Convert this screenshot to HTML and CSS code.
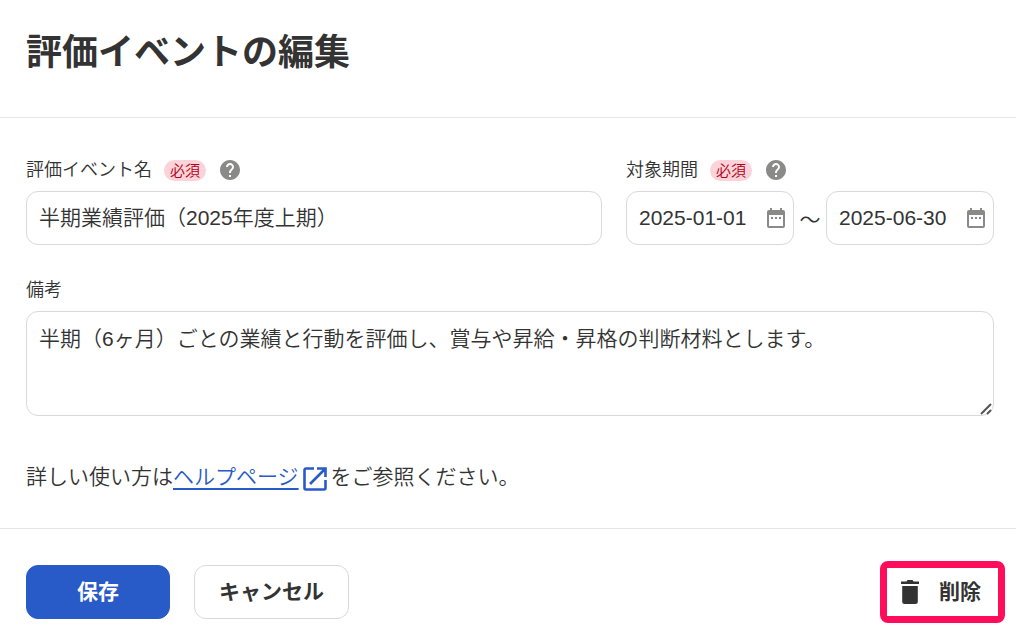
FILE: index.html
```html
<!DOCTYPE html>
<html lang="ja">
<head>
    <meta charset="UTF-8">
    <meta name="viewport" content="width=device-width, initial-scale=1.0">
    <title>評価イベントの編集</title>
    <link rel="stylesheet" href="styles.css">
</head>
<body>
    <form class="event-form">
        <header class="form-header">
            <h1 class="main-title">評価イベントの編集</h1>
        </header>

        <main class="form-body">
            <div class="form-row">
                <!-- イベント名 -->
                <div class="form-group name-group">
                    <div class="label-row">
                        <label for="event_name">評価イベント名</label>
                        <span class="required">必須</span>
                        <svg class="help-icon" viewBox="2 2 20 20" aria-hidden="true"><path d="M12 2C6.48 2 2 6.48 2 12s4.48 10 10 10 10-4.48 10-10S17.52 2 12 2zm1 17h-2v-2h2v2zm2.07-7.75-.9.92C13.45 12.9 13 13.5 13 15h-2v-.5c0-1.1.45-2.1 1.17-2.83l1.24-1.26c.37-.36.59-.86.59-1.41 0-1.1-.9-2-2-2s-2 .9-2 2H8c0-2.21 1.79-4 4-4s4 1.79 4 4c0 .88-.36 1.68-.93 2.25z"/></svg>
                    </div>
                    <input type="text" id="event_name" class="form-input" value="半期業績評価（2025年度上期）">
                </div>

                <!-- 対象期間 -->
                <div class="form-group period-group">
                    <div class="label-row">
                        <label for="start_date">対象期間</label>
                        <span class="required">必須</span>
                        <svg class="help-icon" viewBox="2 2 20 20" aria-hidden="true"><path d="M12 2C6.48 2 2 6.48 2 12s4.48 10 10 10 10-4.48 10-10S17.52 2 12 2zm1 17h-2v-2h2v2zm2.07-7.75-.9.92C13.45 12.9 13 13.5 13 15h-2v-.5c0-1.1.45-2.1 1.17-2.83l1.24-1.26c.37-.36.59-.86.59-1.41 0-1.1-.9-2-2-2s-2 .9-2 2H8c0-2.21 1.79-4 4-4s4 1.79 4 4c0 .88-.36 1.68-.93 2.25z"/></svg>
                    </div>
                    <div class="period">
                        <div class="date-field">
                            <input type="text" id="start_date" class="form-input date-input" value="2025-01-01">
                            <svg class="calendar-icon" viewBox="0 0 18 20" aria-hidden="true"><path fill-rule="evenodd" d="M3 0h2v2h8V0h2v2h1a2 2 0 0 1 2 2v14a2 2 0 0 1-2 2H2a2 2 0 0 1-2-2V4a2 2 0 0 1 2-2h1zM2 7v11h14V7zM4 9h2v2H4zm4 0h2v2H8zm4 0h2v2h-2z"/></svg>
                        </div>
                        <span class="tilde">～</span>
                        <div class="date-field">
                            <input type="text" id="end_date" class="form-input date-input" value="2025-06-30" aria-label="終了日">
                            <svg class="calendar-icon" viewBox="0 0 18 20" aria-hidden="true"><path fill-rule="evenodd" d="M3 0h2v2h8V0h2v2h1a2 2 0 0 1 2 2v14a2 2 0 0 1-2 2H2a2 2 0 0 1-2-2V4a2 2 0 0 1 2-2h1zM2 7v11h14V7zM4 9h2v2H4zm4 0h2v2H8zm4 0h2v2h-2z"/></svg>
                        </div>
                    </div>
                </div>
            </div>

            <!-- 備考 -->
            <div class="form-group">
                <div class="label-row">
                    <label for="note">備考</label>
                </div>
                <div class="note-field">
                    <textarea id="note" class="form-input note">半期（6ヶ月）ごとの業績と行動を評価し、賞与や昇給・昇格の判断材料とします。</textarea>
                    <svg class="grip" viewBox="0 0 12 12" aria-hidden="true"><path d="M1 11 11 1M7 11l4-4"/></svg>
                </div>
            </div>

            <p class="help-text">詳しい使い方は<a href="#">ヘルプページ<svg class="external-icon" viewBox="0 0 24 24" aria-hidden="true"><path d="M11 1.500H3A1.500 1.500 0 0 0 1.500 3v18A1.500 1.500 0 0 0 3 22.500h18a1.500 1.500 0 0 0 1.500-1.500v-8M14 1.500h8.500V10M22 2 7 17"/></svg></a>をご参照ください。</p>
        </main>

        <footer class="form-footer">
            <button type="submit" class="btn btn-save">保存</button>
            <button type="button" class="btn btn-cancel">キャンセル</button>
            <div class="highlight">
                <button type="button" class="btn-delete">
                    <svg class="trash-icon" viewBox="0 0 18 24" aria-hidden="true"><path d="M0 1.500h5.500L6.500 0h5l1 1.500H18V4H0zM1.200 6h15.600v15.500A2.500 2.500 0 0 1 14.300 24H3.700a2.500 2.500 0 0 1-2.500-2.500z"/></svg>
                    <span>削除</span>
                </button>
            </div>
        </footer>
    </form>
</body>
</html>
```
FILE: styles.css
```css
* {
    margin: 0;
    padding: 0;
    box-sizing: border-box;
}

body,
button,
input,
textarea {
    font-family: 'Liberation Sans', 'Noto Sans CJK JP', sans-serif;
    font-size: 21px;
    color: #333;
}

body {
    background: #fff;
    font-weight: 350;
}

.form-header {
    padding: 26px 26px 37px;
    border-bottom: 1px solid #e5e5e5;
}

.main-title {
    font-size: 36px;
    line-height: 54px;
    font-weight: 700;
}

.form-body {
    display: flex;
    flex-direction: column;
    gap: 34px;
    padding: 41px 22px 34px 26px;
}

.form-row {
    display: flex;
    gap: 24px;
}

.name-group {
    flex: 1;
}

.period-group {
    flex: 0 0 368px;
}

.label-row {
    display: flex;
    align-items: center;
    height: 22px;
    margin-bottom: 10px;
    font-size: 18px;
    line-height: 24px;
}

.required {
    margin: 0 14px 0 12px;
    padding: 0 6px;
    border-radius: 11px;
    background: #fbd3d8;
    color: #b00020;
    font-size: 15px;
    line-height: 21px;
}

.help-icon {
    width: 20px;
    height: 20px;
    fill: #8a8a88;
}

.form-input {
    display: block;
    width: 100%;
    height: 54px;
    padding: 0 12px 4px;
    border: 1px solid #d9d9d9;
    border-radius: 12px;
    background: #fff;
    font-weight: 350;
    outline: none;
}

.form-input:focus {
    border-color: #285ac8;
}

.period {
    display: flex;
    align-items: center;
}

.date-field {
    position: relative;
    flex: 1;
}

.date-input {
    padding: 0 12px;
}

.calendar-icon {
    position: absolute;
    top: 17px;
    right: 9px;
    width: 18px;
    height: 20px;
    fill: #8a8a88;
}

.tilde {
    width: 32px;
    text-align: center;
}

.note-field {
    position: relative;
}

.note {
    height: 105px;
    padding: 11px 12px;
    line-height: 32px;
    resize: none;
}

.grip {
    position: absolute;
    right: 2px;
    bottom: 1px;
    width: 12px;
    height: 12px;
    fill: none;
    stroke: #555;
    stroke-width: 2;
}

.help-text {
    margin-top: 10px;
    line-height: 34px;
}

.help-text a {
    color: #285ac8;
    text-decoration: underline;
    text-decoration-thickness: 2px;
    text-underline-offset: 4px;
}

.external-icon {
    width: 24px;
    height: 24px;
    margin: 0 4px;
    vertical-align: -7px;
    fill: none;
    stroke: #285ac8;
    stroke-width: 2.6;
}

.form-footer {
    display: flex;
    align-items: center;
    gap: 24px;
    padding: 32px 11px 18px 26px;
    border-top: 1px solid #e5e5e5;
}

.btn {
    height: 54px;
    padding: 0 24px 4px;
    border: 1px solid #d9d9d9;
    border-radius: 12px;
    background: #fff;
    font-weight: 700;
    cursor: pointer;
}

.btn-save {
    min-width: 144px;
    border-color: #285ac8;
    background: #285ac8;
    color: #fff;
}

.btn-cancel {
    min-width: 155px;
}

.highlight {
    margin-left: auto;
    border: 7px solid #ff0d5b;
    border-radius: 8px;
}

.btn-delete {
    display: flex;
    align-items: center;
    gap: 20px;
    height: 48px;
    padding: 0 17px 0 14px;
    border: none;
    background: #fff;
    font-weight: 700;
    cursor: pointer;
}

.btn-delete span {
    padding-bottom: 4px;
}

.trash-icon {
    width: 18px;
    height: 24px;
    fill: #333;
}
```
